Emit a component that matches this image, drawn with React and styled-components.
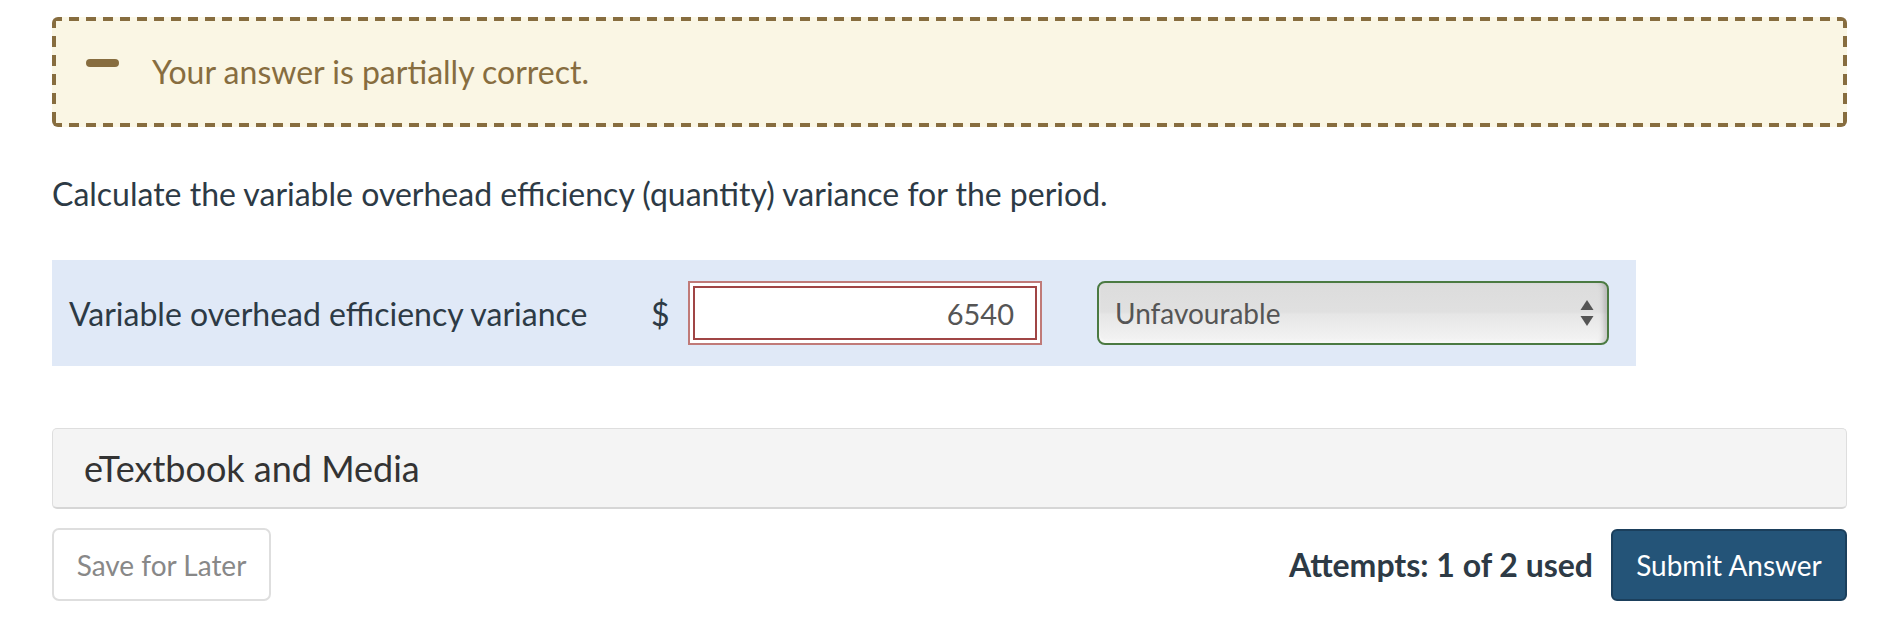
import styled, { createGlobalStyle } from 'styled-components';

const GlobalStyle = createGlobalStyle`
  html, body { margin:0; padding:0; background:#fff; }
  body { font-family: Lato, "Open Sans", sans-serif; color:#2f3b46; }
`;

export default function App() {
  return (
    <>
      <GlobalStyle />
      <Page>
        <Alert>
          <MinusIcon />
          <AlertText>Your answer is partially correct.</AlertText>
        </Alert>

        <Question>Calculate the variable overhead efficiency (quantity) variance for the period.</Question>

        <AnswerRow>
          <Label>Variable overhead efficiency variance</Label>
          <Dollar>$</Dollar>
          <AmountInput defaultValue="6540" readOnly $state="wrong" />
          <Select $state="right">
            <span>Unfavourable</span>
            <svg width="14" height="28" viewBox="0 0 14 28">
              <path d="M7 1 L13.5 11 L0.5 11 Z" fill="#555" />
              <path d="M0.5 17 L13.5 17 L7 27 Z" fill="#555" />
            </svg>
          </Select>
        </AnswerRow>

        <Resources>eTextbook and Media</Resources>

        <Footer>
          <SaveBtn>Save for Later</SaveBtn>
          <Actions>
            <Attempts>Attempts: 1 of 2 used</Attempts>
            <SubmitBtn>Submit Answer</SubmitBtn>
          </Actions>
        </Footer>
      </Page>
    </>
  );
}

/* ============ styles ============ */

const dash = '#876d3f';

const Page = styled.main`
  padding:17px 37px 20px 52px;
`;

// dashed frame drawn with gradients so the dash length matches
const Alert = styled.div`
  display:flex;align-items:flex-start;gap:33px;
  padding:35px 34px;
  border-radius:6px;
  background:
    repeating-linear-gradient(90deg, ${dash} 0 10px, transparent 10px 17px) left top / 100% 4px no-repeat,
    repeating-linear-gradient(90deg, ${dash} 0 10px, transparent 10px 17px) left bottom / 100% 4px no-repeat,
    repeating-linear-gradient(180deg, ${dash} 0 11px, transparent 11px 19px) left top / 4px 100% no-repeat,
    repeating-linear-gradient(180deg, ${dash} 0 11px, transparent 11px 19px) right top / 4px 100% no-repeat,
    #faf6e4;
`;

const MinusIcon = styled.span`
  display:block;width:33px;height:8px;margin-top:7px;
  border-radius:4px;background:${dash};
`;

const AlertText = styled.div`
  font-size:32px;line-height:40px;color:${dash};
`;

const Question = styled.p`
  margin:47px 0 46px;
  font-size:32px;line-height:40px;color:#2d3a45;
`;

const AnswerRow = styled.div`
  display:flex;align-items:center;
  height:106px;padding:0 27px 0 17px;
  width:1584px;box-sizing:border-box;
  background:#e0e9f7;
`;

const Label = styled.div`
  width:582px;font-size:32px;color:#2d3a45;
`;

const Dollar = styled.span`
  width:18px;margin-right:19px;font-size:32px;color:#2d3a45;
`;

const AmountInput = styled.input`
  box-sizing:border-box;width:354px;height:64px;
  padding:0 26px;text-align:right;
  font-family:Lato, sans-serif;font-size:29px;color:#555;
  background:#fff;
  border:2px solid ${p => p.$state === 'wrong' ? '#c07a78' : '#7aa06e'};
  box-shadow:inset 0 0 0 3px #fff, inset 0 0 0 5px ${p => p.$state === 'wrong' ? '#a04545' : '#4d7a44'};
  outline:none;
`;

const Select = styled.div`
  box-sizing:border-box;width:512px;height:64px;margin-left:55px;
  display:flex;align-items:center;justify-content:space-between;
  padding:0 13px 0 16px;
  font-size:28px;color:#555;
  border:2px solid ${p => p.$state === 'right' ? '#4b7a42' : '#a04545'};
  border-radius:8px;
  background:linear-gradient(to bottom, #dcdcdc 0%, #e0e0e0 48%, #e6e6e6 52%, #f4f4f4 100%);
  box-shadow:inset -7px 0 6px -5px rgba(0,0,0,.25), inset 0 -2px 3px rgba(255,255,255,.6);
`;

const Resources = styled.div`
  margin-top:62px;
  box-sizing:border-box;height:81px;
  display:flex;align-items:center;padding:0 31px;
  font-size:36px;color:#333;
  background:#f4f4f4;
  border:1px solid #dedede;border-bottom:2px solid #d6d6d6;
  border-radius:5px;
`;

const Footer = styled.div`
  display:flex;align-items:center;justify-content:space-between;
  margin-top:19px;
`;

const Actions = styled.div`
  display:flex;align-items:center;gap:18px;
`;

const SaveBtn = styled.button`
  box-sizing:border-box;width:219px;height:73px;
  font-family:Lato, sans-serif;font-size:28px;color:#888;
  background:#fff;border:2px solid #dedede;border-radius:7px;
`;

const Attempts = styled.span`
  font-size:32px;font-weight:700;color:#2d3a45;
`;

const SubmitBtn = styled.button`
  box-sizing:border-box;width:236px;height:72px;
  font-family:Lato, sans-serif;font-size:28px;color:#fff;
  background:#245478;border:2px solid #1b3f5c;border-radius:6px;
`;
